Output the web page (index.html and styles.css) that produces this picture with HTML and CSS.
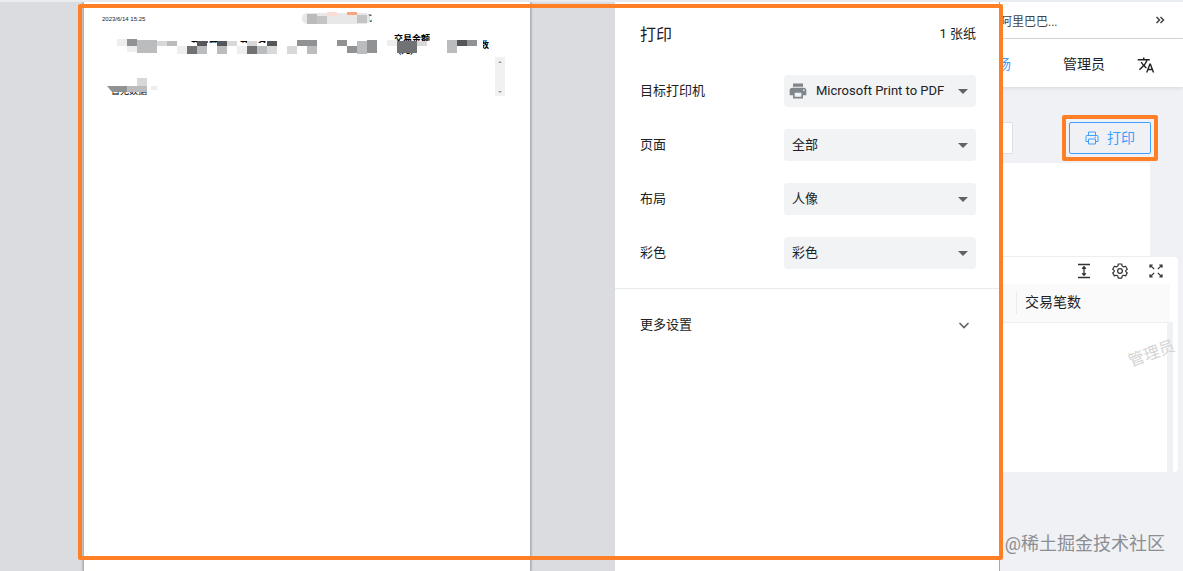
FILE: index.html
```html
<!DOCTYPE html>
<html lang="zh-CN">
<head>
    <meta charset="UTF-8">
    <meta name="viewport" content="width=device-width, initial-scale=1.0">
    <title>打印</title>
    <link rel="stylesheet" href="styles.css">
</head>
<body>
    <div class="screen">
        <!-- Print preview -->
        <section class="preview">
            <div class="sheet">
                <div class="sheet-head">
                    <span class="sheet-date">2023/6/14 15:25</span>
                    <svg class="sheet-logo" width="72" height="14" viewBox="301 13 72 14">
                        <text x="364" y="22" font-size="8">式</text>
                        <rect x="302" y="14" width="68" height="11" rx="5" fill="#e8e8e8"/>
                        <path d="M307 15h10v10h-10z" fill="#bbb"/>
                        <path d="M317 17h10v8h-10zM357 16h10v8h-10z" fill="#c4c4c4"/>
                        <path d="M327 12h10v5h-10z" fill="#fbdcd4"/>
                        <path d="M347 12h10v4h-10z" fill="#f9a47c"/>
                    </svg>
                </div>
                <svg class="sheet-table" width="446" height="70" viewBox="84 30 446 70">
                    <g font-size="9" font-weight="bold">
                        <text x="394" y="42">交易金额</text>
                        <text x="398" y="53">(元)</text>
                        <text x="191" y="48">交易笔数</text>
                        <text x="240" y="48">交易名称</text>
                        <text x="480" y="48">数</text>
                    </g>
                    <text x="111" y="94" font-size="9">暂无数据</text>
                    <!-- hide everything under the header text -->
                    <path d="M187 43h40v8h-40zM187 38h42v3h-42zM237 43h42v8h-42zM237 38h42v3h-42zM394 41h38v10h-38zM107 85h44v6h-44zM478 39h5v12h-5z" fill="#fff"/>
                    <path d="M117 39h10v7h-10zM127 46h10v6h-10zM177 46h10v8h-10zM237 46h10v8h-10zM387 40h10v6h-10zM151 86h6v4h-6z" fill="#eee"/>
                    <path d="M157 41h10v5h-10zM247 41h10v5h-10zM267 46h10v8h-10zM287 46h10v8h-10zM227 41h10v5h-10zM417 41h10v5h-10zM137 78h10v8h-10z" fill="#d8d8d8"/>
                    <path d="M137 40h20v13h-20zM167 41h10v5h-10zM197 46h10v8h-10zM217 46h10v8h-10zM257 46h10v8h-10zM307 46h10v8h-10zM357 41h10v13h-10zM447 40h10v13h-10zM127 86h20v6h-20z" fill="#bbbcbe"/>
                    <path d="M127 39h10v7h-10zM297 40h20v6h-20zM337 40h10v6h-10zM347 46h10v7h-10zM367 40h10v13h-10zM467 40h10v6h-10zM107 86h20v6h-15z" fill="#919294"/>
                    <path d="M187 46h10v8h-10zM247 46h10v8h-10zM397 41h20v12h-20z" fill="#707274"/>
                    <path d="M197 41h10v5h-10zM217 41h10v5h-10zM267 41h10v5h-10zM457 40h10v6h-10z" fill="#555659"/>
                    <path d="M495 57h10v39h-10z" fill="#f1f1f1"/>
                    <path d="M498 63l2-2 2 2zM498 91l2 2 2-2z" fill="#999"/>
                </svg>
            </div>
        </section>

        <!-- Print settings -->
        <form class="settings">
            <div class="settings-main">
                <div class="settings-head">
                    <h1>打印</h1>
                    <span>1 张纸</span>
                </div>
                <div class="row">
                    <label for="printer">目标打印机</label>
                    <div class="field">
                        <svg class="printer-icon" width="20" height="20" viewBox="0 0 24 24">
                            <path fill="#80868b" d="M19 8H5c-1.660 0-3 1.340-3 3v6h4v4h12v-4h4v-6c0-1.660-1.340-3-3-3zm-3 11H8v-5h8v5zm3-7c-.55 0-1-.45-1-1s.45-1 1-1 1 .45 1 1-.45 1-1 1zm-1-9H6v4h12V3z"/>
                        </svg>
                        <select id="printer" class="with-icon"><option>Microsoft Print to PDF</option></select>
                    </div>
                </div>
                <div class="row">
                    <label for="pages">页面</label>
                    <div class="field"><select id="pages"><option>全部</option></select></div>
                </div>
                <div class="row">
                    <label for="layout">布局</label>
                    <div class="field"><select id="layout"><option>人像</option></select></div>
                </div>
                <div class="row">
                    <label for="color">彩色</label>
                    <div class="field"><select id="color"><option>彩色</option></select></div>
                </div>
            </div>
            <button type="button" class="more">
                <span>更多设置</span>
                <svg width="24" height="24" viewBox="0 0 24 24" fill="none" stroke="#5f6368" stroke-width="1.600"><path d="M7.500 10l4.500 4.500 4.500-4.500"/></svg>
            </button>
        </form>

        <!-- Page behind the dialog -->
        <main class="app">
            <div class="bookmarks">
                <a href="#">阿里巴巴...</a>
                <button type="button" aria-label="更多书签">
                    <svg width="10" height="10" viewBox="0 0 10 10" fill="none" stroke="#444" stroke-width="1.500"><path d="M1.500 2L4.500 5 1.500 8M5.500 2L8.500 5 5.500 8"/></svg>
                </button>
            </div>
            <header class="topbar">
                <a href="#" class="active">市场</a>
                <div class="user">
                    <span>管理员</span>
                    <button type="button" aria-label="语言">
                        <svg width="18" height="18" viewBox="0 0 24 24" fill="#222"><path d="M12.870 15.070l-2.540-2.510.03-.03A17.520 17.520 0 0014.070 6H17V4h-7V2H8v2H1v2h11.170C11.500 7.920 10.440 9.750 9 11.350 8.070 10.320 7.300 9.190 6.690 8h-2c.73 1.630 1.730 3.170 2.980 4.560l-5.090 5.020L4 19l5-5 3.110 3.110.76-2.040zM18.500 10h-2L12 22h2l1.120-3h4.750L21 22h2l-4.500-12zm-2.620 7l1.620-4.330L19.120 17h-3.240z"/></svg>
                    </button>
                </div>
            </header>
            <div class="filters">
                <input type="text" aria-label="筛选">
                <div class="print-mark">
                    <button type="button" class="print">
                        <svg width="14" height="14" viewBox="0 0 14 14" fill="none" stroke="#409eff"><path d="M3.500 4V1h7v3M3.500 10.500h-2.500V5.500q0-1 1-1h10q1 0 1 1v5h-2.500M3.500 8h7v5h-7zM9.500 6.250h1.500"/></svg>
                        <span>打印</span>
                    </button>
                </div>
            </div>
            <div class="summary"></div>
            <div class="list">
                <div class="tools">
                    <button type="button" aria-label="密度">
                        <svg width="16" height="16" viewBox="0 0 16 16" fill="none" stroke="#333" stroke-width="1.300"><path d="M2 1.500h12M2 14.500h12M8 4v8M6.200 5.800l1.800-2 1.800 2M6.200 10.200l1.800 2 1.800-2"/></svg>
                    </button>
                    <button type="button" aria-label="列设置">
                        <svg width="16" height="16" viewBox="0 0 16 16" fill="none" stroke="#333" stroke-width="1.200" stroke-linejoin="round"><path d="M6.300 1h3.400l.5 2.100 1.300.8 2.100-.7 1.700 3-1.600 1.400v1l1.600 1.300-1.700 3-2.100-.7-1.300.8-.5 2.100H6.300l-.5-2.100-1.300-.8-2.100.7-1.700-3 1.600-1.300v-1L.7 6.200l1.700-3 2.100.7 1.300-.8z"/><circle cx="8" cy="8" r="2.400"/></svg>
                    </button>
                    <button type="button" aria-label="全屏">
                        <svg width="16" height="16" viewBox="0 0 16 16" fill="none" stroke="#333" stroke-width="1.200"><path d="M2 4.800V2h2.800M2 2l4.200 4.200M11.200 2H14v2.800M14 2L9.800 6.200M2 11.200V14h2.800M2 14l4.200-4.200M11.200 14H14v-2.800M14 14L9.800 9.800"/></svg>
                    </button>
                </div>
                <table>
                    <thead><tr><th>交易笔数</th></tr></thead>
                    <tbody><tr><td></td></tr></tbody>
                </table>
                <span class="watermark">管理员</span>
            </div>
        </main>
        <div class="dialog-mark"></div>
        <span class="credit">@稀土掘金技术社区</span>
    </div>
</body>
</html>
```
FILE: styles.css
```css
* {
    box-sizing: border-box;
}

body {
    margin: 0;
    font-family: Roboto, "Noto Sans CJK SC", sans-serif;
    font-size: 13px;
    color: #202124;
}

button, select, input {
    font: inherit;
    color: inherit;
}

button {
    display: flex;
    align-items: center;
    padding: 0;
    border: none;
    background: none;
    cursor: pointer;
}

a {
    color: inherit;
    text-decoration: none;
}

svg {
    display: block;
    flex: none;
}

.screen {
    position: relative;
    display: flex;
    min-height: 100vh;
    border-top: 2px solid #e9edf1;
    overflow: hidden;
}

/* Preview */
.preview {
    flex: 1;
    display: flex;
    justify-content: center;
    padding-right: 1px;
    background: #dadce0;
}

.sheet {
    width: 448px;
    background: #fff;
    border: 1px solid #b0b2b5;
    border-width: 0 1px;
    box-shadow: 0 0 2px rgba(0, 0, 0, 0.4);
}

.sheet-head {
    display: flex;
    align-items: center;
    height: 28px;
    padding: 8px 18px 2px;
    gap: 153px;
}

.sheet-date {
    width: 46px;
    font: 6px "Liberation Sans", Arial, sans-serif;
    white-space: nowrap;
}

/* Settings */
.settings {
    width: 385px;
    background: #fff;
    border-right: 1px solid #aaa;
}

.settings-main {
    display: flex;
    flex-direction: column;
    gap: 22px;
    padding: 13px 23px 19px 25px;
    border-bottom: 1px solid #e8eaed;
}

.settings-head {
    display: flex;
    justify-content: space-between;
    align-items: center;
    height: 35px;
    margin-bottom: 3px;
}

.settings-head h1 {
    margin: 0;
    font-size: 16px;
    font-weight: normal;
}

.row {
    display: flex;
    justify-content: space-between;
    align-items: center;
}

.row label,
.more span {
    padding-bottom: 4px;
}

.field {
    position: relative;
    width: 192px;
}

.field select {
    display: block;
    width: 100%;
    height: 32px;
    padding: 0 28px 2px 8px;
    border: none;
    border-radius: 4px;
    appearance: none;
    background: #f1f3f4 url("data:image/svg+xml,%3Csvg xmlns='http://www.w3.org/2000/svg' width='10' height='5'%3E%3Cpath d='M0 0h10L5 5z' fill='%235f6368'/%3E%3C/svg%3E") no-repeat right 8px center;
}

.field .with-icon {
    padding-left: 32px;
}

.printer-icon {
    position: absolute;
    left: 4px;
    top: 6px;
}

.more {
    width: 100%;
    height: 72px;
    padding: 0 23px 0 25px;
    justify-content: space-between;
}

/* App page */
.app {
    width: 183px;
    background: #eff1f5;
    overflow: hidden;
}

.bookmarks {
    display: flex;
    justify-content: space-between;
    align-items: center;
    height: 37px;
    padding-right: 18px;
    border-bottom: 1px solid #dcdcdc;
    background: #fff;
    font-size: 12px;
    color: #444;
}

.topbar {
    display: flex;
    justify-content: flex-end;
    align-items: center;
    gap: 52px;
    height: 48px;
    padding-right: 28px;
    background: #fff;
    box-shadow: 0 1px 4px rgba(0, 21, 41, 0.12);
    font-size: 14px;
    white-space: nowrap;
}

.topbar .active {
    color: #409eff;
}

.user {
    display: flex;
    align-items: center;
    gap: 32px;
}

.user button {
    padding-top: 4px;
}

.filters {
    display: flex;
    justify-content: space-between;
    align-items: center;
    height: 76px;
    padding: 26px 25px 0 0;
}

.filters input {
    width: 13px;
    height: 32px;
    padding: 0;
    border: 1px solid #dcdfe6;
    border-left: none;
    border-radius: 0 2px 2px 0;
    background: #fff;
}

.print-mark {
    padding: 3px;
    border: 4px solid #ff7f27;
    border-radius: 2px;
}

.print {
    gap: 8px;
    height: 32px;
    padding: 0 15px;
    border: 1px solid #409eff;
    border-radius: 2px;
    font-size: 14px;
    color: #409eff;
}

.print span {
    padding-bottom: 2px;
}

.summary {
    height: 94px;
    margin-right: 33px;
    background: #fff;
    border-bottom: 1px solid #ebedf0;
}

.list {
    position: relative;
    margin-right: 5px;
    padding-right: 5px;
    background: #fff;
    border-radius: 0 4px 4px 0;
}

.tools {
    display: flex;
    justify-content: flex-end;
    align-items: center;
    gap: 20px;
    height: 27px;
    padding-right: 9px;
}

.list table {
    width: 100%;
    border-collapse: collapse;
}

.list th {
    height: 38px;
    padding: 0 0 3px 25px;
    background: linear-gradient(#ebebeb, #ebebeb) no-repeat 16px center / 1px 22px #fafafa;
    border-bottom: 1px solid #ebeef5;
    font-size: 14px;
    font-weight: normal;
    text-align: left;
}

.list td {
    height: 150px;
    padding: 0;
    border-right: 6px solid #eff1f4;
}

.watermark {
    position: absolute;
    right: 3px;
    top: 83px;
    font-size: 16px;
    color: #d4d4d4;
    transform: rotate(-20deg);
}

/* Highlight round the print dialog */
.dialog-mark {
    position: absolute;
    left: 78px;
    right: 180px;
    top: 2px;
    bottom: 11px;
    border: 4px solid #ff7f27;
    border-radius: 2px;
    pointer-events: none;
}

.credit {
    position: absolute;
    right: 18px;
    bottom: 16px;
    font-size: 18px;
    color: #8c8e91;
}
```
